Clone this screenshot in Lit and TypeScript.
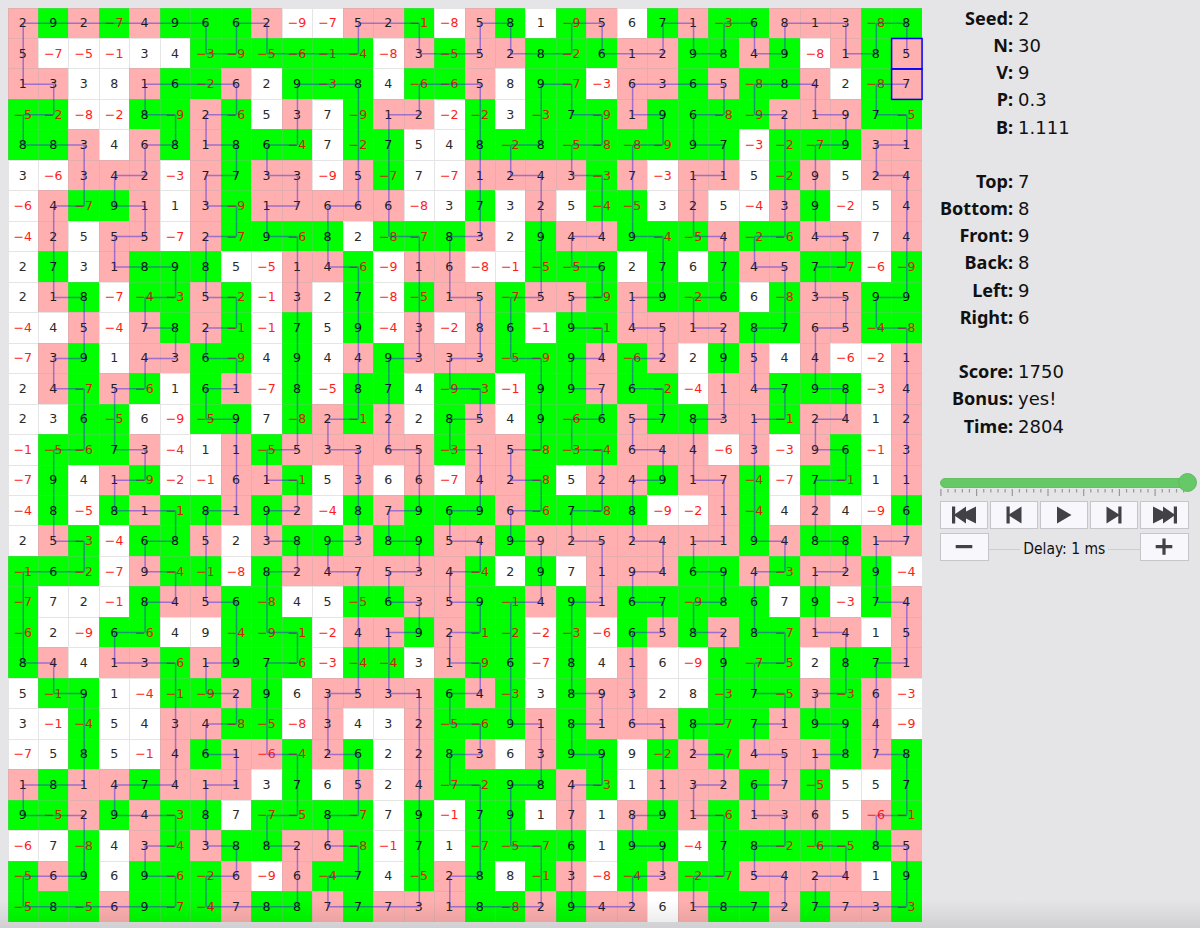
import { html, svg, css, LitElement, CSSResult } from 'lit';
import { customElement, property } from 'lit/decorators.js';
import { map } from 'lit/directives/map.js';
import { classMap } from 'lit/directives/class-map.js';

const N = 30;
const CELL = 30.48;

// One line per board row: the numbers, left to right
const VALUES = `
2 9 2 -7 4 9 6 6 2 -9 -7 5 2 -1 -8 5 8 1 -9 5 6 7 1 -3 6 8 1 3 -8 8
5 -7 -5 -1 3 4 -3 -9 -5 -6 -1 -4 -8 3 -5 5 2 8 -2 6 1 2 9 8 4 9 -8 1 8 5
1 3 3 8 1 6 -2 6 2 9 -3 8 4 -6 -6 5 8 9 -7 -3 6 3 6 5 -8 8 4 2 -8 7
-5 -2 -8 -2 8 -9 2 -6 5 3 7 -9 1 2 -2 -2 3 -3 7 -9 1 9 6 -8 -9 2 1 9 7 -5
8 8 3 4 6 8 1 8 6 -4 7 -2 7 5 4 8 -2 8 -5 -8 -8 -9 9 7 -3 -2 -7 9 3 1
3 -6 3 4 2 -3 7 7 3 3 -9 5 -7 7 -7 1 2 4 3 -3 7 -3 1 1 5 -2 9 5 2 4
-6 4 -7 9 1 1 3 -9 1 7 6 6 6 -8 3 7 3 2 5 -4 -5 3 2 5 -4 3 9 -2 5 4
-4 2 5 5 5 -7 2 -7 9 -6 8 2 -8 -7 8 3 2 9 4 4 9 -4 -5 4 -2 -6 4 5 7 4
2 7 3 1 8 9 8 5 -5 1 4 -6 -9 1 6 -8 -1 -5 -5 6 2 7 6 7 4 5 7 -7 -6 -9
2 1 8 -7 -4 -3 5 -2 -1 3 2 7 -8 -5 1 5 -7 5 5 -9 1 9 -2 6 6 -8 3 5 9 9
-4 4 5 -4 7 8 2 -1 -1 7 5 9 -4 3 -2 8 6 -1 9 -1 4 5 1 2 8 7 6 5 -4 -8
-7 3 9 1 4 3 6 -9 4 9 4 4 9 3 3 3 -5 -9 9 4 -6 2 2 9 5 4 4 -6 -2 1
2 4 -7 5 -6 1 6 1 -7 8 -5 8 7 4 -9 -3 -1 9 9 7 6 -2 -4 1 4 7 9 8 -3 4
2 3 6 -5 6 -9 -5 9 7 -8 2 -1 2 2 8 5 4 9 -6 6 5 7 8 3 1 -1 2 4 1 2
-1 -5 -6 7 3 -4 1 1 -5 5 3 3 6 5 -3 1 5 -8 -3 -4 6 4 4 -6 3 -3 9 6 -1 3
-7 9 4 1 -9 -2 -1 6 1 -1 5 3 6 6 -7 4 2 -8 5 2 4 9 1 7 -4 -7 7 -1 1 1
-4 8 -5 8 1 -1 8 1 9 2 -4 8 7 9 6 9 6 -6 7 -8 8 -9 -2 1 -4 4 2 4 -9 6
2 5 -3 -4 6 8 5 2 3 8 9 3 8 9 5 4 9 9 2 5 2 4 1 1 9 4 8 8 1 7
-1 6 -2 -7 9 -4 -1 -8 8 2 4 7 5 3 4 -4 2 9 7 1 9 4 6 9 4 -3 1 2 9 -4
-7 7 2 -1 8 4 5 6 -8 4 5 -5 6 3 5 9 -1 4 9 1 6 7 -9 8 6 7 9 -3 7 4
-6 2 -9 6 -6 4 9 -4 -9 -1 -2 4 1 9 2 -1 -2 -2 -3 -6 6 5 8 2 8 -7 1 4 1 5
8 4 4 1 3 -6 1 9 7 -6 -3 -4 -4 3 1 -9 6 -7 8 4 1 6 -9 9 -7 -5 2 8 7 1
5 -1 9 1 -4 -1 -9 2 9 6 3 5 3 1 6 4 -3 3 8 9 3 2 8 -3 7 -5 3 -3 6 -3
3 -1 -4 5 4 3 4 -8 -5 -8 3 4 3 2 -5 -6 9 1 8 1 6 1 8 -7 7 1 9 9 4 -9
-7 5 8 5 -1 4 6 1 -6 -4 2 6 2 2 8 3 6 3 9 9 9 -2 2 -7 4 5 1 8 7 8
1 8 1 4 7 4 1 1 3 7 6 5 2 4 -7 -2 9 8 4 -3 1 1 3 2 6 7 -5 5 5 7
9 -5 2 9 4 -3 8 7 -7 -5 8 -7 7 9 -1 7 9 1 7 1 8 9 1 -6 1 3 6 5 -6 -1
-6 7 -8 4 3 -4 3 8 8 2 6 -8 -1 7 1 -7 -5 -7 6 1 9 9 -4 7 8 -2 -6 -5 8 5
-5 6 9 6 9 -6 -2 6 -9 6 -4 7 4 -5 2 8 8 -1 3 -8 -4 3 -2 -7 5 4 2 4 1 9
-5 8 -5 6 9 -7 -4 7 8 8 7 7 7 3 1 8 -8 2 9 4 2 6 1 8 7 2 7 7 3 -3
`.trim().split('\n').map(line => line.split(' ').map(Number));

// W = not visited, P = pink, G = green
const COLORS = [
  'PGPGPGGGPWWPPGWPGWGPWGPGGPPPGG',
  'PWWWWWGGGGGGWPGPPGGGPPGGPGWPGP',
  'PPWWPGGPWGGGWGGPWGGWPPGPGGPWGP',
  'GGWWGGPGWPWGPPWGWGGGPGGGGPPPGG',
  'GGPWPGPGGGWGGWWGGGGGGGGGWGGGPP',
  'WWPPPWPGPPWPGWWPPPPGPWPPWGPWPP',
  'WPGGPWPGPPPPPWWGWPWGGWPWWPGWWP',
  'WPWPPWPGGGGWGGGPWGPPGGGPGGPPWP',
  'WGWPGGGWWPPGWPPWWGGGWGWGPPGGWG',
  'WPGWGGPGWPWGWGPPGPPGPGGGWGPPGG',
  'WWPWPGPGWGWGWPWPGWGGPPPPGGPPGG',
  'WPGWPPGGWGWPGPPPGGGPGPWGPWPWWP',
  'WPGPGWGPWGWGGWGGWGGPGGWPPGGGWP',
  'WWGGWWGGWGPGPWGPWGGGPGGPPGPPWP',
  'WGGGPWWPGPPPPPGPPGGGPPPWPWPGWP',
  'WGWPGWWPPGWPWPWPPGWPPGPPGWGGWP',
  'WGWGPGGPGPWGPGGGPGGGGWWPGWPWWG',
  'WPGWGGPWPGGPGGPPGPPPPPPPGPGGPP',
  'GGGWPGGWGPPPPPPGWGWPPPGGPGPPGW',
  'GWWWGPPGGWWGGPPGGPGPGGGGGWGWGP',
  'GWWGGWWGGGWPPGPGGWGWGPGPGGPPWP',
  'GPWPPGPGGGWGGWPGGWGWPWWGGGWGGP',
  'WGGWWGGPGWPPPPGPGWGPPWWGGGPGPW',
  'WWGWWPPGGWPWWPGGGPGPPPGGGPGGPW',
  'WWGWWPGPPGPGWPGPWPGGWGPGPPPGPG',
  'PGPPGPPPWGWPWPGGGGPGWPPPGPGWWG',
  'GGPGPGGWGGGGWGWGGWPWPGPGPPPWPG',
  'WWGWPGPGGPPGWGWGGGGWGGWGGGGGGP',
  'GPGWGGGPWPGGWGPGWGPWGPGGPPPPWG',
  'GGGPGGGPGGPGPPPGGPGPPWPGGPGPPG',
];

// Links of each cell: - goes right, | goes down, + goes both ways
const LINKS = [
  '+-----|+|..+-|.+|.+|.+|+|+-|+|',
  '|.....-.---..--.--.--.-.-..-..',
  '-|..+--|.+-|.+-|.+|.+--|+-|.+.',
  '+...-|+..|.|+..|.|-|-|+.-|-|-|',
  '--|.+.-|+..||..|+.+.+.-|.|+.+.',
  '..|+..+.-|.||..|-|-||.+..||.-|',
  '.+.-|.-|+.+.|..|.|.||.|..||..|',
  '.|.+..+.-||.-|+..|+.-|-|+.-|.|',
  '.|.--||..|-|.||..|-|.|.|-|+..|',
  '.-|.+.-|.|.|.|-|+.+.+.+..|-|+.',
  '..|.-|+..|.|.|.||.-|-|-|+.+.-|',
  '.+..+.-|.|.|+.+.-|+.+..||.|..|',
  '.-|+..+..|.||.-|.|-|-|.|-|-|.|',
  '..||..-|.|+.|.+..|+.+.+.+.+..|',
  '.+.-|..|+.-|-|-|+.-|-||.|.-|.|',
  '.|.+...|-|.|.|.|-|.|+.-||.+..|',
  '.|.--|+.+..|+.+.+.+.|..||.|..|',
  '.-|.+.|.-|+.-|-|-|-|-|+.-|-|+.',
  '+-..-||.+.-|+.+..|.|+.-|+.+.|.',
  '|...+.-||..|-|-|+.+.-|+.|.|.-|',
  '|..+...|-|.|+.+.|.|.+.-|-|-|.|',
  '-|.--|+.+..||.-||.|.|..|+..|+.',
  '.-|..|-||.+.-|+.|.-||..|-|+.|.',
  '..|..|+.|.|..|-|-|+.-|+.+.-||.',
  '..|..|-|-|-|.|+..|-|.|-|-|+.-|',
  '+-.+-.+..|.|.|-|+.+..|+.+.|..|',
  '--|--||.+.+..|.||.|.+.-|-||.+.',
  '..|.+.-|-|-|.|.|-||.-|.|+.-|-|',
  '+-..-|+..|+..|+..||.+.+.-|+..|',
  '-----.---.---.---.--..---.---.',
];

const STATS = [
  [['Seed', '2'], ['N', '30'], ['V', '9'], ['P', '0.3'], ['B', '1.111']],
  [['Top', '7'], ['Bottom', '8'], ['Front', '9'], ['Back', '8'], ['Left', '9'], ['Right', '6']],
  [['Score', '1750'], ['Bonus', 'yes!'], ['Time', '2804']],
];

@customElement('path-board')
export class PathBoard extends LitElement {
  // The two ends of the path, as [row, column]
  @property({ attribute: false }) ends = [[1, 29], [2, 29]];

  private linkPath(): string {
    let d = '';
    LINKS.forEach((row, y) => {
      [...row].forEach((link, x) => {
        const start = `M${((x + 0.5) * CELL).toFixed(2)} ${((y + 0.5) * CELL).toFixed(2)}`;
        if (link === '-' || link === '+') {
          d += `${start}h${CELL}`;
        }
        if (link === '|' || link === '+') {
          d += `${start}v${CELL}`;
        }
      });
    });
    return d;
  }

  private renderCell(value: number, color: string) {
    const classes = {
      cell: true,
      pink: color === 'P',
      green: color === 'G',
      negative: value < 0,
    };
    return html`<div class=${classMap(classes)}>${value < 0 ? `\u2212${-value}` : value}</div>`;
  }

  render() {
    const size = N * CELL;
    return html`
      <div class="board">
        ${map(VALUES, (row, y) => map(row, (value, x) => this.renderCell(value, COLORS[y][x])))}
        <svg class="overlay" viewBox="0 0 ${size} ${size}">
          <path class="links" d=${this.linkPath()} />
          ${this.ends.map(([y, x]) => svg`
            <rect class="end" x=${x * CELL} y=${y * CELL} width=${CELL} height=${CELL} />
          `)}
        </svg>
      </div>
    `;
  }

  static get styles(): CSSResult {
    return css`
      :host {
        display: block;
      }
      .board {
        position: relative;
        display: grid;
        grid-template-columns: repeat(30, 30.48px);
        grid-auto-rows: 30.48px;
      }
      .cell {
        display: flex;
        align-items: center;
        justify-content: center;
        box-sizing: border-box;
        background: #fff;
        box-shadow: inset 1px 1px rgba(170, 170, 170, 0.3);
        color: #2a2a2a;
        font: 12.6px 'DejaVu Sans', sans-serif;
      }
      .pink {
        background: #ffafaf;
        color: #1c1c1c;
      }
      .green {
        background: #00ff00;
        color: #001400;
      }
      .negative {
        color: #ff1c1c;
      }
      .green.negative {
        color: #c82800;
      }
      .overlay {
        position: absolute;
        inset: 0;
        width: 100%;
        height: 100%;
        overflow: visible;
      }
      .links {
        fill: none;
        stroke: rgba(48, 32, 230, 0.45);
        stroke-width: 1.5;
      }
      .end {
        fill: none;
        stroke: #0000f0;
        stroke-width: 1.5;
      }
    `;
  }
}

@customElement('playback-controls')
export class PlaybackControls extends LitElement {
  private renderTicks() {
    // every fifth tick is a long one
    return Array.from({ length: 35 }, (_, i) => svg`
      <path d="M${(0.9 + i * 7.14).toFixed(2)} 0v${i % 5 === 0 ? 7 : 3.5}" />
    `);
  }

  render() {
    return html`
      <div class="slider">
        <div class="track"></div>
        <div class="thumb"></div>
      </div>
      <svg class="ticks" width="250" height="8">${this.renderTicks()}</svg>
      <div class="buttons">
        <button><svg width="26" height="18"><path d="M1 .5h3.200v7.500L15 .5v5L25 .5v17l-10-5v5L4.200 10v7.500H1z" /></svg></button>
        <button><svg width="16" height="18"><path d="M.5.5h3.200v7.500L15.500.5v17L3.700 10v7.500H.5z" /></svg></button>
        <button><svg width="16" height="18"><path d="M1 .5L15.500 9 1 17.500z" /></svg></button>
        <button><svg width="16" height="18"><path d="M15.500.5h-3.200v7.500L.5.5v17L12.300 10v7.500h3.200z" /></svg></button>
        <button><svg width="26" height="18"><path d="M25 .5h-3.200v7.500L11 .5v5L1 .5v17l10-5v5L21.800 10v7.500H25z" /></svg></button>
      </div>
      <div class="delay">
        <button><svg width="18" height="18"><path d="M.7 7h16.600v3.200H.7z" /></svg></button>
        <span class="rule"></span>
        <span class="text">Delay: 1 ms</span>
        <span class="rule"></span>
        <button><svg width="18" height="18"><path d="M.7 7h6.700V.4h3.200V7h6.700v3.200h-6.700v6.600H7.400v-6.600H.7z" /></svg></button>
      </div>
    `;
  }

  static get styles(): CSSResult {
    return css`
      :host {
        display: block;
        width: 248.5px;
      }
      .slider {
        position: relative;
        height: 10px;
      }
      .track {
        box-sizing: border-box;
        height: 10px;
        border: 1px solid #62c062;
        border-radius: 5px;
        background: #66c866;
      }
      .thumb {
        position: absolute;
        top: -4.5px;
        right: -8px;
        box-sizing: border-box;
        width: 19px;
        height: 19px;
        border: 1px solid #5fbb5f;
        border-radius: 50%;
        background: #66c866;
      }
      .ticks {
        display: block;
        margin-top: 1px;
        stroke: #98989a;
        stroke-width: 1.2;
      }
      .buttons {
        display: grid;
        grid-template-columns: repeat(5, 1fr);
        gap: 2px;
        margin-top: 4.5px;
      }
      button {
        display: flex;
        align-items: center;
        justify-content: center;
        box-sizing: border-box;
        height: 28px;
        padding: 0;
        border: 1px solid #c6c6ca;
        border-radius: 0;
        background: #f7f7fc;
        fill: #414146;
      }
      .delay {
        display: flex;
        align-items: center;
        margin-top: 4px;
      }
      .delay button {
        width: 48.5px;
        flex: none;
      }
      .rule {
        flex: 1;
        height: 1px;
        margin-top: 4px;
        background: #cdcdd0;
      }
      .text {
        padding: 3px 3px 0;
        color: #111;
        font: 15.5px 'DejaVu Sans Condensed', 'DejaVu Sans', sans-serif;
        font-stretch: condensed;
        white-space: nowrap;
      }
    `;
  }
}

@customElement('app-root')
export class AppRoot extends LitElement {
  render() {
    return html`
      <div class="window">
        <path-board></path-board>
        <div class="side">
          ${STATS.map(group => html`
            <div class="group">
              ${group.map(([label, value]) => html`
                <div class="label">${label}:</div>
                <div class="value">${value}</div>
              `)}
            </div>
          `)}
          <playback-controls></playback-controls>
        </div>
        <div class="shade"></div>
      </div>
    `;
  }

  static get styles(): CSSResult {
    return css`
      :host {
        display: block;
      }
      .window {
        position: relative;
        display: flex;
        box-sizing: border-box;
        width: 1200px;
        height: 928px;
        padding: 7.5px 0 0 7.5px;
        overflow: hidden;
        background: #e5e5e8;
      }
      .side {
        padding-left: 18.5px;
        margin-top: -2.8px;
      }
      .group {
        display: grid;
        grid-template-columns: 73px auto;
        column-gap: 5px;
        grid-auto-rows: 27.2px;
        align-items: center;
        margin-bottom: 27.2px;
        color: #111;
      }
      .label {
        justify-self: end;
        font: bold 18.1px/27px 'Noto Sans', sans-serif;
        white-space: nowrap;
      }
      .value {
        font: 18px/27px 'DejaVu Sans', sans-serif;
      }
      playback-controls {
        margin-top: 38px;
      }
      .shade {
        position: absolute;
        left: 0;
        right: 0;
        bottom: 0;
        height: 28px;
        background: linear-gradient(rgba(0, 0, 0, 0), rgba(0, 0, 0, 0.09));
        pointer-events: none;
      }
    `;
  }
}
